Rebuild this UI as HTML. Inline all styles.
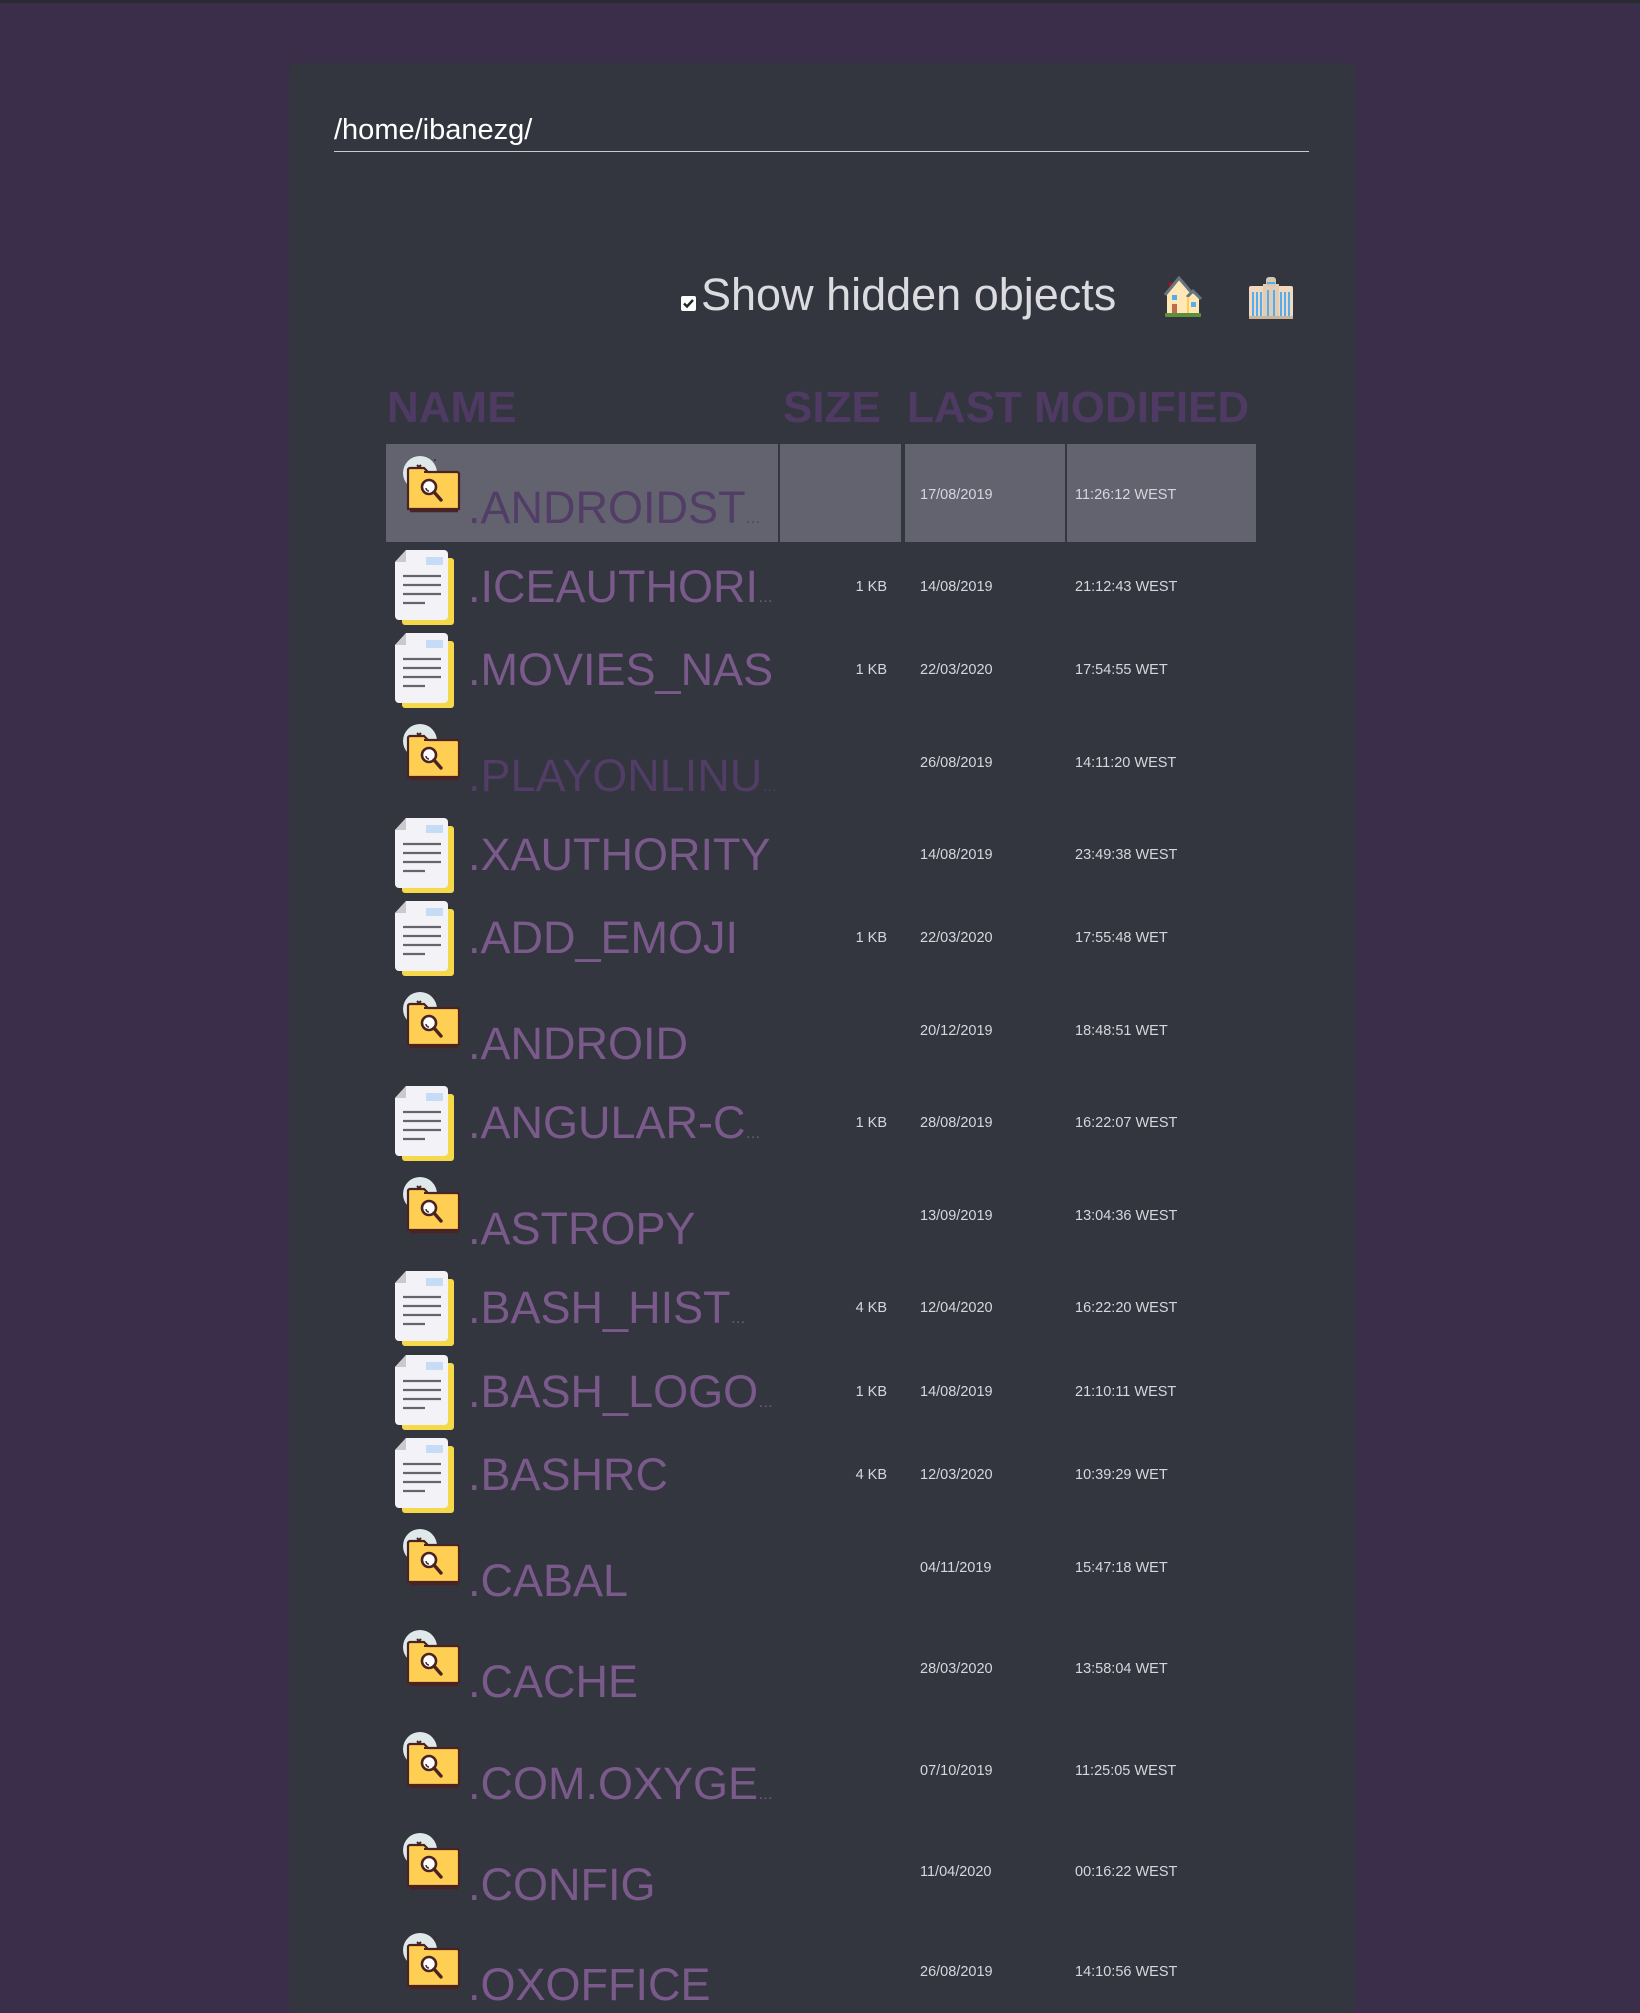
<!DOCTYPE html>
<html><head><meta charset="utf-8">
<style>
*{margin:0;padding:0;box-sizing:border-box}
html,body{width:1640px;height:1974px;overflow:hidden;background:#3a2e4a;font-family:"Liberation Sans",sans-serif}
.topbar{position:absolute;left:0;top:0;width:1640px;height:3px;background:#2a2a33}
.card{position:absolute;left:289px;top:63px;width:1067px;height:1950px;background:#33363f;border-radius:8px}
.abs{position:absolute;white-space:nowrap;line-height:1}
.path{left:334px;top:116px;font-size:29px;color:#fff}
.uline{position:absolute;left:334px;top:151px;width:975px;height:1px;background:#c9c9d0}
.cb{position:absolute;left:681px;top:296px;width:15px;height:15px;background:#fff;border-radius:2px}
.show{left:701px;top:272px;font-size:45px;color:#dcdce0}
.hd{font-size:44px;font-weight:bold;color:#4e3a62;top:386px}
.hl{position:absolute;top:444px;height:98px;background:#63626f}
.name{position:absolute;left:468px;font-size:45px;line-height:1;color:#7a5a8a;white-space:nowrap}
.name.dk{color:#513d66}
.name small{font-size:15px}
.sm{position:absolute;font-size:14.5px;line-height:1;color:#d6d6de;white-space:nowrap}
.sz{left:820px;width:67px;text-align:right}
.dt{left:920px}
.tm{left:1075px}
svg.ic{position:absolute}
</style></head><body>
<div class="topbar"></div>
<div class="card"></div>
<div class="abs path">/home/ibanezg/</div>
<div class="uline"></div>
<div class="cb"><svg width="15" height="15" viewBox="0 0 15 15"><path d="M3 7.5l3 3 6-6.5" stroke="#222" stroke-width="2.4" fill="none"/></svg></div>
<div class="abs show">Show hidden objects</div>
<svg class="ic" style="left:1163px;top:276px" width="40" height="42" viewBox="0 0 40 42">
<rect x="6" y="6" width="3" height="8" fill="#a0141e"/>
<path d="M4 38V18L16 3l10 12 10 6v17z" fill="#ffe8b6"/>
<path d="M2 19L16 2l12 14M24 21l6-6 8 8" stroke="#66757f" stroke-width="3" fill="none"/>
<rect x="24" y="21" width="2" height="17" fill="#ffcc4d"/>
<rect x="9" y="19" width="5" height="5" fill="#55acee"/><rect x="28" y="26" width="5" height="5" fill="#55acee"/>
<rect x="9" y="28" width="5" height="10" fill="#c1694f"/>
<rect x="2" y="37" width="36" height="4" rx="1" fill="#5c913b"/></svg>
<svg class="ic" style="left:1247px;top:276px" width="48" height="44" viewBox="0 0 48 44">
<rect x="2" y="10" width="16" height="33" rx="2" fill="#f0d9bf"/><rect x="30" y="10" width="16" height="33" rx="2" fill="#f0d9bf"/>
<rect x="16" y="8" width="16" height="35" fill="#e2cdb4"/><rect x="19" y="1" width="10" height="9" rx="3" fill="#d9c6ae"/>
<g fill="#55acee"><rect x="5" y="16" width="2" height="24"/><rect x="9" y="16" width="2" height="24"/><rect x="13" y="16" width="2" height="24"/><rect x="33" y="16" width="2" height="24"/><rect x="37" y="16" width="2" height="24"/><rect x="41" y="16" width="2" height="24"/><rect x="20" y="14" width="2" height="26"/><rect x="26" y="14" width="2" height="26"/><rect x="20" y="6" width="8" height="2"/></g>
<rect x="2" y="40" width="44" height="3" fill="#c9b59e"/></svg>

<div class="abs hd" style="left:387px">NAME</div>
<div class="abs hd" style="left:783px">SIZE</div>
<div class="abs hd" style="left:907px">LAST MODIFIED</div>

<div class="hl" style="left:386px;width:392px"></div>
<div class="hl" style="left:780px;width:121px"></div>
<div class="hl" style="left:905px;width:160px"></div>
<div class="hl" style="left:1067px;width:189px"></div>

<svg width="0" height="0" style="position:absolute">
<defs>
<symbol id="fo" viewBox="0 0 72 60">
<circle cx="30" cy="20" r="17" fill="#dfe9ea"/>
<path d="M27 12l4 4M31 12l-4 4" stroke="#4a2323" stroke-width="2"/>
<circle cx="45" cy="7" r="1" fill="#4a2323"/>
<path d="M18 56V17a2 2 0 0 1 2-2h14l4 4h29a2 2 0 0 1 2 2v35z" fill="#ffcf54" stroke="#4a2323" stroke-width="2.2"/>
<path d="M34 19h33" stroke="#4a2323" stroke-width="2"/>
<path d="M20 58h48" stroke="#4a2323" stroke-width="2.4"/>
<circle cx="39" cy="34" r="7" fill="#fff" stroke="#4a2323" stroke-width="2.6"/>
<path d="M44 39l7 8" stroke="#4a2323" stroke-width="3.4" stroke-linecap="round"/>
<path d="M36 35a3 3 0 0 0 3 3" stroke="#4a2323" stroke-width="1.5" fill="none"/>
</symbol>
<symbol id="fi" viewBox="0 0 66 78">
<rect x="12" y="9" width="52" height="67" rx="3" fill="#f5d94a"/>
<path d="M16 1h38a4 4 0 0 1 4 4v62a4 4 0 0 1-4 4H9a4 4 0 0 1-4-4V13z" fill="#f3f3f7"/>
<path d="M5 13L16 1v12z" fill="#c9c9cf"/>
<rect x="36" y="8" width="17" height="8" fill="#c6dcf6"/>
<g stroke="#66646c" stroke-width="2.2"><path d="M13 27h38M13 36h38M13 45h38M13 54h22"/></g>
</symbol>
</defs></svg>

<!-- rows -->
<svg class="ic" style="left:390px;top:453px" width="72" height="60"><use href="#fo"/></svg>
<div class="name dk" style="top:485px">.ANDROIDST<small>…</small></div>
<div class="sm dt" style="top:488px">17/08/2019</div><div class="sm tm" style="top:488px">11:26:12 WEST</div>

<svg class="ic" style="left:390px;top:549px" width="66" height="78"><use href="#fi"/></svg>
<div class="name" style="top:564px">.ICEAUTHORI<small>…</small></div>
<div class="sm sz" style="top:580px">1 KB</div><div class="sm dt" style="top:580px">14/08/2019</div><div class="sm tm" style="top:580px">21:12:43 WEST</div>

<svg class="ic" style="left:390px;top:632px" width="66" height="78"><use href="#fi"/></svg>
<div class="name" style="top:647px">.MOVIES_NAS</div>
<div class="sm sz" style="top:663px">1 KB</div><div class="sm dt" style="top:663px">22/03/2020</div><div class="sm tm" style="top:663px">17:54:55 WET</div>

<svg class="ic" style="left:390px;top:721px" width="72" height="60"><use href="#fo"/></svg>
<div class="name dk" style="top:753px">.PLAYONLINU<small>…</small></div>
<div class="sm dt" style="top:756px">26/08/2019</div><div class="sm tm" style="top:756px">14:11:20 WEST</div>

<svg class="ic" style="left:390px;top:817px" width="66" height="78"><use href="#fi"/></svg>
<div class="name" style="top:832px">.XAUTHORITY</div>
<div class="sm dt" style="top:848px">14/08/2019</div><div class="sm tm" style="top:848px">23:49:38 WEST</div>

<svg class="ic" style="left:390px;top:900px" width="66" height="78"><use href="#fi"/></svg>
<div class="name" style="top:915px">.ADD_EMOJI</div>
<div class="sm sz" style="top:931px">1 KB</div><div class="sm dt" style="top:931px">22/03/2020</div><div class="sm tm" style="top:931px">17:55:48 WET</div>

<svg class="ic" style="left:390px;top:989px" width="72" height="60"><use href="#fo"/></svg>
<div class="name" style="top:1021px">.ANDROID</div>
<div class="sm dt" style="top:1024px">20/12/2019</div><div class="sm tm" style="top:1024px">18:48:51 WET</div>

<svg class="ic" style="left:390px;top:1085px" width="66" height="78"><use href="#fi"/></svg>
<div class="name" style="top:1100px">.ANGULAR-C<small>…</small></div>
<div class="sm sz" style="top:1116px">1 KB</div><div class="sm dt" style="top:1116px">28/08/2019</div><div class="sm tm" style="top:1116px">16:22:07 WEST</div>

<svg class="ic" style="left:390px;top:1174px" width="72" height="60"><use href="#fo"/></svg>
<div class="name" style="top:1206px">.ASTROPY</div>
<div class="sm dt" style="top:1209px">13/09/2019</div><div class="sm tm" style="top:1209px">13:04:36 WEST</div>

<svg class="ic" style="left:390px;top:1270px" width="66" height="78"><use href="#fi"/></svg>
<div class="name" style="top:1285px">.BASH_HIST<small>…</small></div>
<div class="sm sz" style="top:1301px">4 KB</div><div class="sm dt" style="top:1301px">12/04/2020</div><div class="sm tm" style="top:1301px">16:22:20 WEST</div>

<svg class="ic" style="left:390px;top:1354px" width="66" height="78"><use href="#fi"/></svg>
<div class="name" style="top:1369px">.BASH_LOGO<small>…</small></div>
<div class="sm sz" style="top:1385px">1 KB</div><div class="sm dt" style="top:1385px">14/08/2019</div><div class="sm tm" style="top:1385px">21:10:11 WEST</div>

<svg class="ic" style="left:390px;top:1437px" width="66" height="78"><use href="#fi"/></svg>
<div class="name" style="top:1452px">.BASHRC</div>
<div class="sm sz" style="top:1468px">4 KB</div><div class="sm dt" style="top:1468px">12/03/2020</div><div class="sm tm" style="top:1468px">10:39:29 WET</div>

<svg class="ic" style="left:390px;top:1526px" width="72" height="60"><use href="#fo"/></svg>
<div class="name" style="top:1558px">.CABAL</div>
<div class="sm dt" style="top:1561px">04/11/2019</div><div class="sm tm" style="top:1561px">15:47:18 WET</div>

<svg class="ic" style="left:390px;top:1627px" width="72" height="60"><use href="#fo"/></svg>
<div class="name" style="top:1659px">.CACHE</div>
<div class="sm dt" style="top:1662px">28/03/2020</div><div class="sm tm" style="top:1662px">13:58:04 WET</div>

<svg class="ic" style="left:390px;top:1729px" width="72" height="60"><use href="#fo"/></svg>
<div class="name" style="top:1761px">.COM.OXYGE<small>…</small></div>
<div class="sm dt" style="top:1764px">07/10/2019</div><div class="sm tm" style="top:1764px">11:25:05 WEST</div>

<svg class="ic" style="left:390px;top:1830px" width="72" height="60"><use href="#fo"/></svg>
<div class="name" style="top:1862px">.CONFIG</div>
<div class="sm dt" style="top:1865px">11/04/2020</div><div class="sm tm" style="top:1865px">00:16:22 WEST</div>

<svg class="ic" style="left:390px;top:1930px" width="72" height="60"><use href="#fo"/></svg>
<div class="name" style="top:1962px">.OXOFFICE</div>
<div class="sm dt" style="top:1965px">26/08/2019</div><div class="sm tm" style="top:1965px">14:10:56 WEST</div>
</body></html>
